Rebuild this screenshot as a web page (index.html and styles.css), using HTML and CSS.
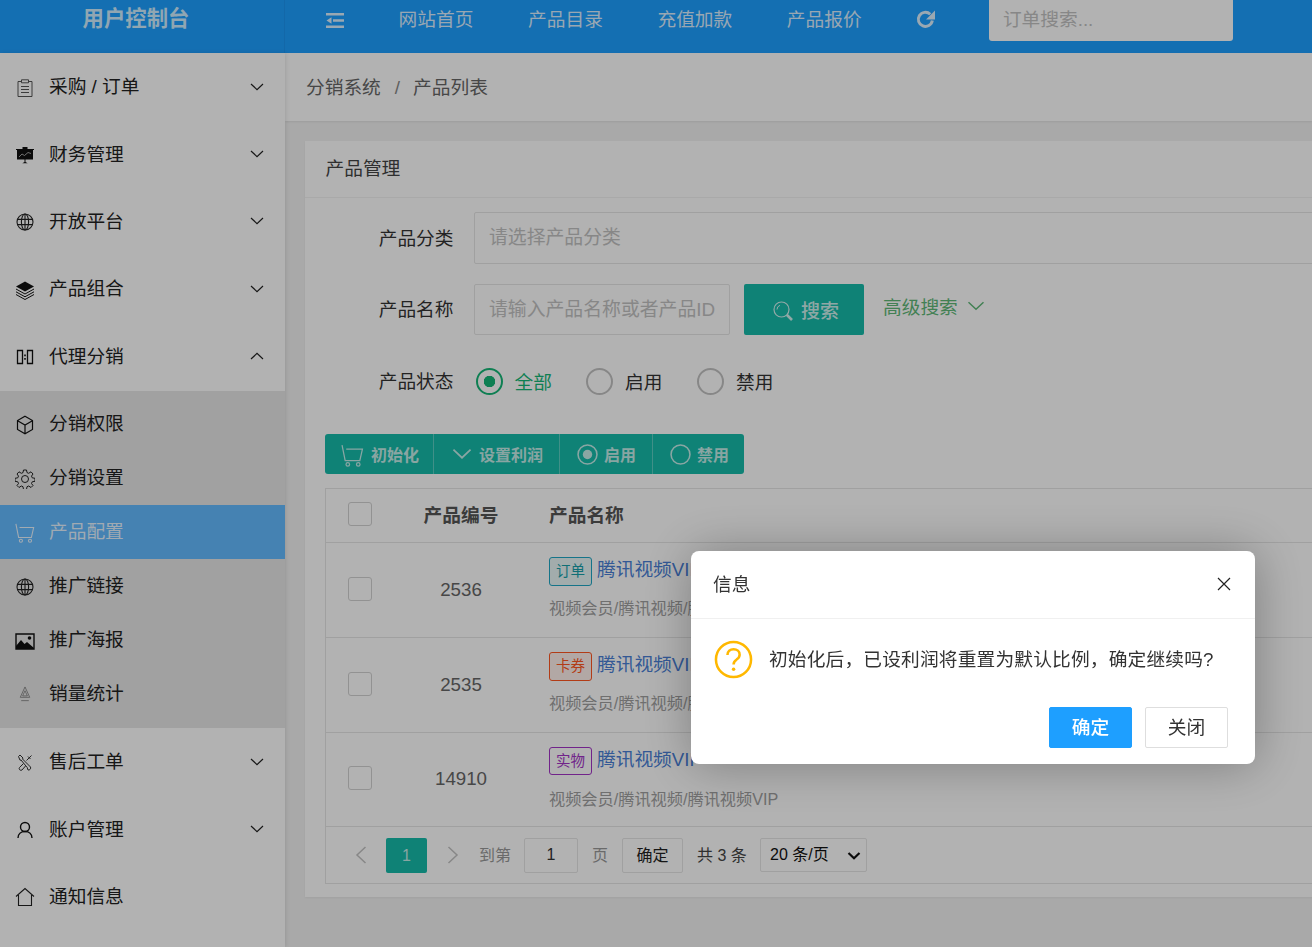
FILE: index.html
```html
<!DOCTYPE html>
<html lang="zh-CN">
<head>
    <meta charset="UTF-8">
    <title>用户控制台</title>
    <link rel="stylesheet" href="styles.css">
</head>
<body>
    <svg class="defs" width="0" height="0">
        <symbol id="i-chevron" viewBox="0 0 14 8"><path d="M1 1l6 5.600L13 1" fill="none" stroke="currentColor" stroke-width="1.200"/></symbol>
        <symbol id="i-globe" viewBox="0 0 18 18"><g fill="none" stroke="currentColor" stroke-width="1.100"><circle cx="9" cy="9" r="8"/><ellipse cx="9" cy="9" rx="3.600" ry="8"/><path d="M9 1v16M1.500 6.400h15M1.500 11.600h15"/></g></symbol>
        <symbol id="i-cart" viewBox="0 0 22 22"><g fill="none" stroke="currentColor" stroke-width="1.200"><path d="M1 1l3 15h14l2.500-11H5"/><circle cx="6.500" cy="19.500" r="1.700"/><circle cx="16.500" cy="19.500" r="1.700"/></g></symbol>
    </svg>

    <header class="topbar">
        <div class="logo">用户控制台</div>
        <nav class="topnav">
            <svg class="icon-fold" viewBox="0 0 18 15"><path d="M0 0h18v2.600H0zM7 6.200h11v2.600H7zM0 12.400h18V15H0zM5.500 4.200v6.600L0.500 7.500z" fill="currentColor"/></svg>
            <a href="#">网站首页</a>
            <a href="#">产品目录</a>
            <a href="#">充值加款</a>
            <a href="#">产品报价</a>
            <svg class="icon-refresh" viewBox="0 0 18 18"><path d="M15.500 10a6.700 6.700 0 1 1-2-6" fill="none" stroke="currentColor" stroke-width="2.800"/><path d="M18 0.500v8.500H9.500z" fill="currentColor"/></svg>
            <input class="order-search" placeholder="订单搜索...">
        </nav>
    </header>

    <div class="layout">
        <aside class="sidebar">
            <a class="menu-item" href="#">
                <svg class="menu-icon" viewBox="0 0 20 20"><g fill="none" stroke="#444" stroke-width="0.900"><path d="M6 3.500H3V18.500h14V3.500h-3"/><path d="M6.500 1.800h7v3h-7zM6 8.500h8M6 11.500h8M6 14.500h8"/></g></svg>
                <span>采购 / 订单</span>
                <svg class="arrow"><use href="#i-chevron"/></svg>
            </a>
            <a class="menu-item" href="#">
                <svg class="menu-icon" viewBox="0 0 20 20"><path d="M7.500 2h5v2h6.500v1H18v9.500H2V5H1V4h6.500zM9.500 14.500h1v2.500l2.200 1.200H7.300l2.200-1.200z" fill="#111"/><path d="M4 12l3-3 2.500 1.500L13 7.500l3 1" fill="none" stroke="#b2b2b2" stroke-width="0.900"/></svg>
                <span>财务管理</span>
                <svg class="arrow"><use href="#i-chevron"/></svg>
            </a>
            <a class="menu-item" href="#">
                <svg class="menu-icon icon-globe"><use href="#i-globe"/></svg>
                <span>开放平台</span>
                <svg class="arrow"><use href="#i-chevron"/></svg>
            </a>
            <a class="menu-item" href="#">
                <svg class="menu-icon" viewBox="0 0 20 20"><path d="M10 1.500l9 5-9 5-9-5z" fill="#111"/><path d="M1 9l9 5 9-5M1 11.800l9 5 9-5M1 14.500l9 5 9-5" fill="none" stroke="#111" stroke-width="1"/></svg>
                <span>产品组合</span>
                <svg class="arrow"><use href="#i-chevron"/></svg>
            </a>
            <a class="menu-item" href="#">
                <svg class="menu-icon" viewBox="0 0 20 20"><path d="M2.500 3.500h5v13h-5zM12.500 3.500h5v13h-5z" fill="none" stroke="#111" stroke-width="1.300"/><path d="M9.200 7.500h1.600v1.700H9.200zM9.200 11h1.600v1.700H9.200z" fill="#111"/></svg>
                <span>代理分销</span>
                <svg class="arrow arrow-up"><use href="#i-chevron"/></svg>
            </a>

            <div class="submenu">
                <a class="sub-item" href="#">
                    <svg class="menu-icon" viewBox="0 0 20 20"><path d="M10 1.300l7.500 4.300v8.800L10 18.700l-7.500-4.300V5.600zM3 6l7 4 7-4M10 10v8" fill="none" stroke="#111" stroke-width="1.200"/></svg>
                    <span>分销权限</span>
                </a>
                <a class="sub-item" href="#">
                    <svg class="menu-icon" viewBox="0 0 20 20"><g fill="none" stroke="#222" stroke-width="1"><circle cx="10" cy="10" r="3.500"/><path d="M8.500 1h3l.5 2.600 1.700.7L16 2.800 18 5l-1.500 2.100.7 1.700 2.800.5v3l-2.800.5-.7 1.700L18 16.500l-2 2-2.300-1.500-1.700.7-.5 2.800h-3l-.5-2.800-1.700-.7L4 18.500l-2-2 1.500-2.000-.7-1.700L0 12.300v-3l2.800-.5.700-1.700L2 5l2-2.200 2.300 1.500 1.700-.7z"/></g></svg>
                    <span>分销设置</span>
                </a>
                <a class="sub-item active" href="#">
                    <svg class="menu-icon"><use href="#i-cart"/></svg>
                    <span>产品配置</span>
                </a>
                <a class="sub-item" href="#">
                    <svg class="menu-icon icon-globe"><use href="#i-globe"/></svg>
                    <span>推广链接</span>
                </a>
                <a class="sub-item" href="#">
                    <svg class="menu-icon" viewBox="0 0 20 20"><path d="M1 3h18v15H1z" fill="none" stroke="#111" stroke-width="1.400"/><path d="M1 18v-3l5-6 3.500 4 2.500-2 7 6v1z" fill="#111"/><circle cx="14.500" cy="7" r="1.800" fill="#111"/></svg>
                    <span>推广海报</span>
                </a>
                <a class="sub-item" href="#">
                    <svg class="menu-icon icon-small" viewBox="0 0 12 18"><path d="M6 1L1 12h10zM6 5L3.500 10.500h5zM2 15.500h8" fill="none" stroke="#666" stroke-width="0.700"/></svg>
                    <span>销量统计</span>
                </a>
            </div>

            <a class="menu-item" href="#">
                <svg class="menu-icon icon-tools" viewBox="0 0 16 18"><g fill="none" stroke="#333" stroke-width="1"><path d="M1.500 2.500l1.500-1.500 3 3-.5 1 8 8a2.200 2.200 0 0 1-2.500 3l-.8-2.500L4 6l-1 .2z"/><path d="M14.500 1.500L9.500 6.500M11 2.500l2.500 2.500M6.500 9.500L2.500 13.500a1.800 1.800 0 0 0 2.500 2.500l3.500-4"/></g></svg>
                <span>售后工单</span>
                <svg class="arrow"><use href="#i-chevron"/></svg>
            </a>
            <a class="menu-item" href="#">
                <svg class="menu-icon icon-tools" viewBox="0 0 16 18"><circle cx="8" cy="6" r="4.500" fill="none" stroke="#111" stroke-width="1.400"/><path d="M1 17c0-4 3-6.500 7-6.500s7 2.500 7 6.500" fill="none" stroke="#111" stroke-width="1.400"/></svg>
                <span>账户管理</span>
                <svg class="arrow"><use href="#i-chevron"/></svg>
            </a>
            <a class="menu-item" href="#">
                <svg class="menu-icon" viewBox="0 0 20 20"><path d="M1 9.500L10 1.500l9 8M3.500 8v10.500h13V8" fill="none" stroke="#222" stroke-width="1.100"/></svg>
                <span>通知信息</span>
            </a>
        </aside>

        <main class="main">
            <div class="breadcrumb">
                <span>分销系统</span><i>/</i><span>产品列表</span>
            </div>

            <section class="card">
                <div class="card-title">产品管理</div>
                <div class="card-body">
                    <div class="form-row">
                        <label class="form-label">产品分类</label>
                        <input class="text-input input-wide" placeholder="请选择产品分类">
                    </div>
                    <div class="form-row">
                        <label class="form-label">产品名称</label>
                        <input class="text-input input-name" placeholder="请输入产品名称或者产品ID">
                        <button class="btn-search">
                            <svg class="icon-search" viewBox="0 0 20 20"><circle cx="8.500" cy="8.500" r="7.500" fill="none" stroke="currentColor" stroke-width="1.200"/><path d="M4 8.500a4.500 4.500 0 0 1 3-4.200" fill="none" stroke="currentColor"/><path d="M14 14l5 5" stroke="currentColor" stroke-width="2.600"/></svg>
                            搜索
                        </button>
                        <a class="adv-link" href="#">高级搜索<svg class="adv-arrow"><use href="#i-chevron"/></svg></a>
                    </div>
                    <div class="form-row radio-row">
                        <label class="form-label">产品状态</label>
                        <span class="radio checked"><b></b>全部</span>
                        <span class="radio"><b></b>启用</span>
                        <span class="radio"><b></b>禁用</span>
                    </div>

                    <div class="toolbar">
                        <button class="tool-btn tool-first"><svg class="tool-cart"><use href="#i-cart"/></svg>初始化</button>
                        <button class="tool-btn tool-profit"><svg class="tool-chevron"><use href="#i-chevron"/></svg>设置利润</button>
                        <button class="tool-btn tool-on"><svg class="tool-radio" viewBox="0 0 20 20"><circle cx="10" cy="10" r="9" fill="none" stroke="currentColor" stroke-width="1.500"/><circle cx="10" cy="10" r="4.500" fill="currentColor"/></svg>启用</button>
                        <button class="tool-btn tool-off"><svg class="tool-radio" viewBox="0 0 20 20"><circle cx="10" cy="10" r="9" fill="none" stroke="currentColor" stroke-width="1.500"/></svg>禁用</button>
                    </div>

                    <div class="table-box">
                        <table class="product-table">
                            <thead>
                                <tr>
                                    <th class="col-check"><span class="checkbox"></span></th>
                                    <th class="col-id">产品编号</th>
                                    <th class="col-name">产品名称</th>
                                </tr>
                            </thead>
                            <tbody>
                                <tr>
                                    <td class="col-check"><span class="checkbox"></span></td>
                                    <td class="col-id">2536</td>
                                    <td class="col-name">
                                        <div class="name-line"><span class="tag tag-order">订单</span><a href="#">腾讯视频VIP</a></div>
                                        <div class="name-path">视频会员/腾讯视频/腾讯视频VIP</div>
                                    </td>
                                </tr>
                                <tr>
                                    <td class="col-check"><span class="checkbox"></span></td>
                                    <td class="col-id">2535</td>
                                    <td class="col-name">
                                        <div class="name-line"><span class="tag tag-card">卡券</span><a href="#">腾讯视频VIP</a></div>
                                        <div class="name-path">视频会员/腾讯视频/腾讯视频VIP</div>
                                    </td>
                                </tr>
                                <tr class="row-last">
                                    <td class="col-check"><span class="checkbox"></span></td>
                                    <td class="col-id">14910</td>
                                    <td class="col-name">
                                        <div class="name-line"><span class="tag tag-real">实物</span><a href="#">腾讯视频VIP</a></div>
                                        <div class="name-path">视频会员/腾讯视频/腾讯视频VIP</div>
                                    </td>
                                </tr>
                            </tbody>
                        </table>
                        <div class="pager">
                            <svg class="pager-arrow" viewBox="0 0 12 18"><path d="M10.500 1L2 9l8.500 8" fill="none" stroke="currentColor" stroke-width="1.500"/></svg>
                            <span class="page-current">1</span>
                            <svg class="pager-arrow pager-next" viewBox="0 0 12 18"><path d="M1.500 1L10 9l-8.500 8" fill="none" stroke="currentColor" stroke-width="1.500"/></svg>
                            <span class="pager-text pager-goto">到第</span>
                            <input class="pager-input" value="1">
                            <span class="pager-text pager-unit">页</span>
                            <button class="pager-ok">确定</button>
                            <span class="pager-total">共 3 条</span>
                            <div class="pager-select">
                                <select class="pager-size"><option>20 条/页</option></select>
                                <svg class="select-arrow" viewBox="0 0 14 8"><path d="M1.500 1L7 6.300 12.500 1" fill="none" stroke="#111" stroke-width="2.200"/></svg>
                            </div>
                        </div>
                    </div>
                </div>
            </section>
        </main>
    </div>

    <div class="shade"></div>
    <div class="dialog">
        <div class="dialog-title">
            <span>信息</span>
            <svg class="dialog-close" viewBox="0 0 14 14"><path d="M1 1l12 12M13 1L1 13" fill="none" stroke="#222" stroke-width="1.200"/></svg>
        </div>
        <div class="dialog-body">
            <svg class="dialog-icon" viewBox="0 0 40 40"><circle cx="20" cy="20" r="18" fill="none" stroke="#ffb800" stroke-width="2.600"/><path d="M13.800 15.500c0-3.800 2.800-6 6.300-6s6.200 2.300 6.200 5.500c0 2.800-1.700 4-3.300 5.200-1.700 1.200-2.900 2.300-2.900 4.800" fill="none" stroke="#ffb800" stroke-width="2.600"/><circle cx="20.100" cy="30" r="1.800" fill="#ffb800"/></svg>
            <span>初始化后，已设利润将重置为默认比例，确定继续吗?</span>
        </div>
        <div class="dialog-actions">
            <button class="dialog-btn dialog-ok">确定</button>
            <button class="dialog-btn">关闭</button>
        </div>
    </div>
</body>
</html>
```

FILE: styles.css
```css
* {
    box-sizing: border-box;
}
html, body {
    height: 100%;
}
body {
    margin: 0;
    overflow: hidden;
    background: #f2f2f2;
    color: #333;
    font-family: "Liberation Sans", "Noto Sans CJK SC", sans-serif;
    font-size: 18.72px;
}
a {
    color: inherit;
    text-decoration: none;
}
input, button, select {
    font-family: inherit;
}
.defs {
    position: absolute;
}

/* header */
.topbar {
    display: flex;
    height: 53px;
    background: #1e9fff;
}
.logo {
    flex: none;
    width: 285px;
    height: 53px;
    padding-right: 12px;
    border-right: 1px solid rgba(0,0,0,0.05);
    color: #cfeeff;
    font-size: 21.400px;
    font-weight: bold;
    line-height: 38px;
    text-align: center;
}
.topnav {
    display: flex;
    align-items: flex-start;
    gap: 54.600px;
    padding-left: 41px;
    color: rgba(255,255,255,0.85);
    line-height: 39px;
}
.icon-fold {
    width: 18px;
    height: 15px;
    margin-top: 13px;
}
.icon-refresh {
    width: 19px;
    height: 19px;
    margin: 10px -1px 0 0;
}
.order-search {
    width: 244px;
    height: 41px;
    padding: 0 14px 1px;
    border: none;
    border-radius: 0 0 3px 3px;
    background: #fff;
    font-size: 18.72px;
}
::placeholder {
    color: #c2c2c2;
    opacity: 1;
}

/* sidebar */
.layout {
    display: flex;
    height: calc(100% - 53px);
}
.sidebar {
    flex: none;
    width: 285px;
    background: #fff;
    color: #222;
    box-shadow: 1px 0 4px rgba(0,0,0,0.1);
    z-index: 1;
}
.menu-item, .sub-item {
    display: flex;
    align-items: center;
    padding-left: 15px;
}
.menu-item span, .sub-item span {
    margin-bottom: 4px;
}
.menu-item {
    height: 67.400px;
}
.sub-item {
    height: 54px;
}
.menu-icon {
    flex: none;
    width: 20px;
    height: 20px;
    margin: 2px 14px 0 0;
}
.icon-globe {
    width: 18px;
    height: 18px;
    margin: 2px 15px 0 1px;
}
.icon-small {
    height: 17px;
}
.icon-tools {
    height: 18px;
}
.arrow {
    width: 14px;
    height: 8px;
    margin-left: auto;
    margin-right: 21px;
}
.arrow-up {
    transform: rotate(180deg);
}
.submenu {
    margin-top: 1px;
    padding: 6px 0 7px;
    background: #e7e7e7;
}
.sub-item.active {
    background: #64baff;
    color: rgba(255,255,255,0.85);
}

/* main */
.main {
    flex: 1;
    min-width: 0;
}
.breadcrumb {
    display: flex;
    align-items: center;
    height: 68px;
    padding-left: 21px;
    background: #fff;
    color: #666;
    box-shadow: 0 1px 2px rgba(0,0,0,0.08);
}
.breadcrumb span {
    margin-bottom: 4px;
}
.breadcrumb i {
    margin: 2px 13px 0 14px;
    font-style: normal;
    color: #888;
}
.card {
    width: 1200px;
    margin: 20px 0 0 20px;
    background: #fff;
    box-shadow: 0 1px 2px rgba(0,0,0,0.05);
}
.card-title {
    height: 57px;
    padding-left: 20.500px;
    border-bottom: 1px solid #f2f2f2;
    color: #444;
    line-height: 55px;
}
.card-body {
    padding: 14px 20px 13px;
}
.form-row {
    display: flex;
    align-items: center;
    margin-bottom: 20px;
}
.form-label {
    width: 128.500px;
    margin: 0 20.500px 4px 0;
    text-align: right;
}
.text-input {
    height: 51px;
    padding: 0 14px;
    border: 1px solid #e6e6e6;
    border-radius: 2px;
    background: #fff;
    font-size: 18.850px;
}
.input-wide {
    flex: 1;
    height: 52px;
}
.input-name {
    width: 256px;
}
.btn-search {
    display: flex;
    align-items: center;
    justify-content: center;
    gap: 8px;
    width: 120px;
    height: 51px;
    margin-left: 14px;
    padding: 0 0 0 4px;
    border: none;
    border-radius: 2px;
    background: #16baaa;
    color: rgba(255,255,255,0.8);
    font-size: 19px;
    font-weight: 500;
}
.icon-search {
    width: 20px;
    height: 20px;
    margin-top: 2px;
}
.adv-link {
    display: flex;
    align-items: center;
    margin: 0 0 8px 19px;
    color: #5fb878;
}
.adv-arrow {
    width: 18px;
    height: 10px;
    margin: 0 0 0 9px;
}
.radio-row {
    height: 42px;
    margin: 25px 0 32px;
}
.radio {
    display: flex;
    align-items: center;
    gap: 12px;
    width: 111px;
    padding-bottom: 2px;
    color: #333;
}
.radio:first-of-type {
    width: 110.500px;
    margin-left: 1.500px;
}
.radio b {
    width: 27px;
    height: 27px;
    margin-top: 2px;
    border: 2px solid #c2c2c2;
    border-radius: 50%;
}
.radio.checked {
    color: #16b777;
}
.radio.checked b {
    border-color: #16b777;
    background: radial-gradient(circle, #16b777 5.500px, transparent 6px);
}
.toolbar {
    display: flex;
    width: 419px;
    height: 40px;
    border-radius: 3px;
    background: #16baaa;
}
.tool-btn {
    display: flex;
    align-items: center;
    height: 40px;
    padding: 0;
    border: none;
    border-left: 1px solid rgba(255,255,255,0.3);
    background: none;
    color: rgba(255,255,255,0.75);
    font-size: 16px;
    font-weight: bold;
}
.tool-first {
    width: 108px;
    padding-left: 16px;
    border-left: none;
}
.tool-profit {
    width: 126px;
    padding-left: 18px;
}
.tool-on {
    width: 93px;
    padding-left: 17px;
}
.tool-off {
    flex: 1;
    padding-left: 17px;
}
.tool-cart {
    width: 23px;
    height: 23px;
    margin: 2px 7px 0 0;
}
.tool-chevron {
    width: 20px;
    height: 12px;
    margin-right: 7px;
}
.tool-radio {
    width: 21px;
    height: 21px;
    margin-right: 6px;
}

/* table */
.table-box {
    margin-top: 14px;
    border: 1px solid #e6e6e6;
}
.product-table {
    width: 100%;
    border-collapse: collapse;
    table-layout: fixed;
}
.product-table th {
    height: 53px;
    padding: 0 0 4px;
    border-bottom: 1px solid #e6e6e6;
    color: #555;
}
.product-table th.col-check {
    padding-bottom: 2px;
}
.product-table td {
    height: 95px;
    padding: 0 0 2px;
    border-bottom: 1px solid #e6e6e6;
    color: #666;
}
.product-table td.col-id {
    padding-bottom: 0;
}
.product-table .row-last td {
    height: 94px;
}
.col-check {
    width: 68px;
    text-align: center;
}
.col-id {
    width: 134px;
    text-align: center;
}
.product-table th.col-name {
    padding-left: 21px;
    text-align: left;
}
.product-table td.col-name {
    padding: 14px 0 0 21px;
    vertical-align: top;
}
.checkbox {
    display: block;
    width: 24px;
    height: 24px;
    margin: 0 auto;
    border: 1px solid #d2d2d2;
    border-radius: 3px;
    background: #fff;
}
.name-line {
    display: flex;
    align-items: flex-start;
    gap: 5px;
}
.name-line a {
    padding-top: 1px;
    color: #4a7fd6;
    line-height: 24px;
}
.tag {
    width: 43px;
    height: 29px;
    border: 1px solid;
    border-radius: 3px;
    font-size: 14.500px;
    line-height: 27px;
    text-align: center;
}
.tag-order {
    border-color: #1fa7c4;
    background: #e8f6f7;
    color: #16a0aa;
}
.tag-card {
    border-color: #ff5722;
    background: #fff1ec;
    color: #ff5722;
}
.tag-real {
    height: 28px;
    border-color: #a233c6;
    color: #a233c6;
}
.name-path {
    margin-top: 10px;
    color: #a0a0a0;
    font-size: 16.200px;
    line-height: 24px;
}
.row-last .name-path {
    margin-top: 12px;
}

/* pager */
.pager {
    display: flex;
    align-items: center;
    height: 56px;
    padding: 1px 0 0 29px;
    font-size: 16px;
}
.pager-arrow {
    width: 12px;
    height: 18px;
    color: #c2c2c2;
}
.pager-next {
    margin-left: 20px;
}
.page-current {
    width: 41px;
    height: 35px;
    margin-left: 19px;
    border-radius: 2px;
    background: #16baaa;
    color: rgba(255,255,255,0.75);
    line-height: 35px;
    text-align: center;
}
.pager-text {
    margin-bottom: 3px;
    color: #999;
}
.pager-goto {
    margin-left: 20px;
}
.pager-input {
    width: 54px;
    height: 35px;
    margin-left: 13px;
    border: 1px solid #e6e6e6;
    border-radius: 2px;
    background: #fff;
    color: #333;
    font-size: 16px;
    text-align: center;
}
.pager-unit {
    margin-left: 14px;
}
.pager-ok {
    width: 61px;
    height: 35px;
    margin-left: 14px;
    padding: 0 0 3px;
    border: 1px solid #e6e6e6;
    border-radius: 2px;
    background: #fff;
    color: #222;
    font-size: 16px;
}
.pager-total {
    width: 50px;
    margin: 0 0 3px 14px;
    white-space: nowrap;
    color: #444;
}
.pager-select {
    position: relative;
    margin-left: 13px;
}
.pager-size {
    display: block;
    width: 107px;
    height: 34px;
    padding: 0 0 2px 9px;
    border: 1px solid #e6e6e6;
    border-radius: 2px;
    appearance: none;
    background: #fff;
    color: #111;
    font-size: 16px;
}
.select-arrow {
    position: absolute;
    top: 14px;
    right: 6px;
    width: 14px;
    height: 8px;
}

/* dialog */
.shade {
    position: fixed;
    inset: 0;
    z-index: 10;
    background: rgba(0,0,0,0.3);
}
.dialog {
    position: fixed;
    top: 551px;
    left: 691px;
    z-index: 11;
    width: 564px;
    height: 213px;
    border-radius: 8px;
    background: #fff;
    box-shadow: 1px 1px 50px rgba(0,0,0,0.3);
}
.dialog-title {
    display: flex;
    align-items: center;
    justify-content: space-between;
    height: 68px;
    padding: 0 24px 1px 22px;
    border-bottom: 1px solid #f0f0f0;
    color: #333;
}
.dialog-title span {
    margin-bottom: 4px;
}
.dialog-close {
    width: 14px;
    height: 14px;
}
.dialog-body {
    display: flex;
    align-items: center;
    gap: 16px;
    height: 81px;
    padding: 0 0 0 23px;
    color: #333;
}
.dialog-body span {
    margin-bottom: 4px;
    letter-spacing: 0.170px;
}
.dialog-icon {
    flex: none;
    width: 39px;
    height: 39px;
}
.dialog-actions {
    display: flex;
    justify-content: flex-end;
    gap: 13px;
    margin-top: 7px;
    padding-right: 27px;
}
.dialog-btn {
    width: 83px;
    height: 41px;
    padding: 0 0 4px;
    border: 1px solid #dedede;
    border-radius: 2px;
    background: #fff;
    color: #333;
    font-size: 18.72px;
}
.dialog-ok {
    border-color: #1e9fff;
    background: #1e9fff;
    color: #fff;
    font-weight: 500;
}
```
